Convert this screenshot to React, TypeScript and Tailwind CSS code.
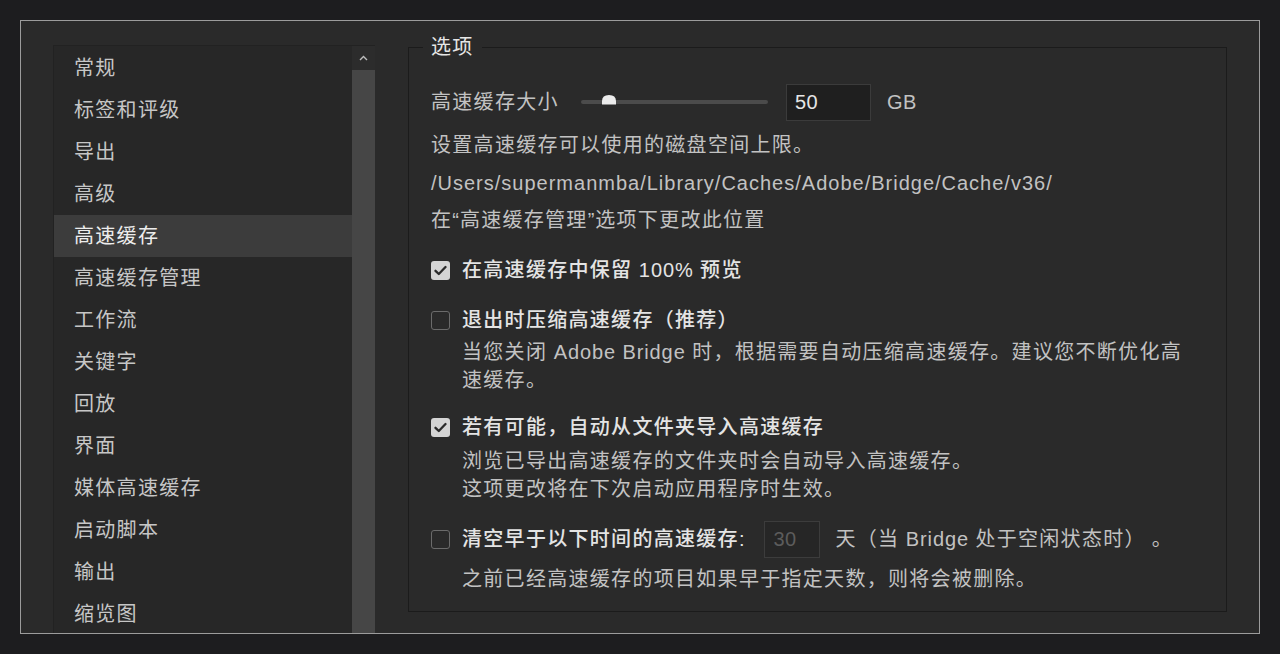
import React from "react";

const CJK = /([\u2E80-\u9FFF\u3000-\u303F\uFF00-\uFFEF]+)/;

function T({ s }: { s: string }) {
  const parts = s.split(CJK);
  return (
    <>
      {parts.map((p, i) =>
        i % 2 === 1 ? (
          <span key={i} className="tracking-[1.3px]">
            {p}
          </span>
        ) : (
          <span key={i} className="tracking-[0.9px]">
            {p}
          </span>
        )
      )}
    </>
  );
}

const items = [
  "常规",
  "标签和评级",
  "导出",
  "高级",
  "高速缓存",
  "高速缓存管理",
  "工作流",
  "关键字",
  "回放",
  "界面",
  "媒体高速缓存",
  "启动脚本",
  "输出",
  "缩览图",
];

function Check({ checked }: { checked: boolean }) {
  if (checked) {
    return (
      <div className="w-[19px] h-[19px] rounded-[3px] bg-[#d4d4d4] flex items-center justify-center shrink-0">
        <svg width="13" height="11" viewBox="0 0 13 11">
          <path d="M1.5 5.8 L4.8 9 L11.5 2" fill="none" stroke="#2a2a2a" strokeWidth="2.3" strokeLinecap="round" strokeLinejoin="round" />
        </svg>
      </div>
    );
  }
  return <div className="w-[19px] h-[19px] rounded-[3px] border border-[#6b6b6b] shrink-0" />;
}

export default function App() {
  return (
    <div
      className="w-[1280px] h-[654px] bg-[#1d1d1f] pt-[20px] pl-[20px] text-[20px]"
      style={{ fontFamily: '"Liberation Sans", "Noto Sans CJK SC", sans-serif' }}
    >
      <div className="w-[1240px] h-[614px] border border-[#9c9c9c] bg-[#2a2a2a] flex">
        {/* Left list */}
        <div className="ml-[32px] mt-[24px] w-[322px] flex bg-[#272727] border-l border-t border-[#222222]">
          <div className="w-[299px] pt-[1px]">
            {items.map((it, i) => (
              <div
                key={i}
                className={
                  i === 4
                    ? "h-[42px] flex items-center pl-[20px] bg-[#3c3c3c] text-[#ececec]"
                    : "h-[42px] flex items-center pl-[20px] text-[#c6c6c6]"
                }
              >
                <T s={it} />
              </div>
            ))}
          </div>
          <div className="w-[23px] flex flex-col">
            <div className="h-[24px] bg-[#2c2c2c] flex items-center justify-center">
              <svg width="9" height="6" viewBox="0 0 9 6">
                <path d="M1 5 L4.5 1.5 L8 5" fill="none" stroke="#bdbdbd" strokeWidth="1.4" />
              </svg>
            </div>
            <div className="flex-1 bg-[#464646]" />
          </div>
        </div>

        {/* Right group box */}
        <div className="ml-[33px] mt-[26px] w-[819px] h-[565px] border border-[#1b1b1b] relative">
          <div className="absolute left-[14px] -top-[15px] px-[8px] bg-[#2a2a2a] text-[#e6e6e6] leading-[28px]">
            <T s="选项" />
          </div>
          <div className="pl-[22px] pt-[36px] text-[#c2c2c2]">
            {/* slider row */}
            <div className="h-[36px] flex items-center">
              <span className="w-[128px]">
                <T s="高速缓存大小" />
              </span>
              <div className="ml-[22px] w-[187px] h-[4px] rounded-full bg-[#4b4b4b] relative">
                <svg className="absolute left-[20px] -top-[6px]" width="16" height="11" viewBox="0 0 16 11">
                  <path d="M1 10.5 L1 7 Q1 1 8 1 Q15 1 15 7 L15 10.5 Z" fill="#ececec" />
                </svg>
              </div>
              <div className="ml-[18px] w-[85px] h-[37px] bg-[#1f1f1f] border border-[#3b3b3b] flex items-center pl-[8px] text-[#e6e6e6] tracking-[0.5px]">
                50
              </div>
              <span className="ml-[16px] tracking-[0.5px]">GB</span>
            </div>

            <div className="mt-[6px] leading-[38px]">
              <div>
                <T s="设置高速缓存可以使用的磁盘空间上限。" />
              </div>
              <div className="tracking-[1px]">/Users/supermanmba/Library/Caches/Adobe/Bridge/Cache/v36/</div>
              <div className="leading-[37px]">
                <T s="在“高速缓存管理”选项下更改此位置" />
              </div>
            </div>

            {/* cb1 */}
            <div className="mt-[17px] h-[28px] flex items-center gap-[12px]">
              <Check checked={true} />
              <span className="text-[#e4e4e4] font-medium">
                <T s="在高速缓存中保留 100% 预览" />
              </span>
            </div>

            {/* cb2 */}
            <div className="mt-[22px] h-[28px] flex items-center gap-[12px]">
              <Check checked={false} />
              <span className="text-[#e4e4e4] font-medium">
                <T s="退出时压缩高速缓存（推荐）" />
              </span>
            </div>
            <div className="mt-[4px] pl-[31px] leading-[28px]">
              <div>
                <T s="当您关闭 Adobe Bridge 时，根据需要自动压缩高速缓存。建议您不断优化高" />
              </div>
              <div>
                <T s="速缓存。" />
              </div>
            </div>

            {/* cb3 */}
            <div className="mt-[19px] h-[28px] flex items-center gap-[12px]">
              <Check checked={true} />
              <span className="text-[#e4e4e4] font-medium">
                <T s="若有可能，自动从文件夹导入高速缓存" />
              </span>
            </div>
            <div className="mt-[6px] pl-[31px] leading-[28px]">
              <div>
                <T s="浏览已导出高速缓存的文件夹时会自动导入高速缓存。" />
              </div>
              <div>
                <T s="这项更改将在下次启动应用程序时生效。" />
              </div>
            </div>

            {/* cb4 */}
            <div className="mt-[18px] h-[36px] flex items-center">
              <Check checked={false} />
              <span className="ml-[12px] text-[#e4e4e4] font-medium">
                <T s="清空早于以下时间的高速缓存:" />
              </span>
              <div className="ml-[19px] w-[56px] h-[37px] bg-[#262626] border border-[#3c3c3c] flex items-center pl-[8px] text-[#5c5c5c] tracking-[0.5px]">
                30
              </div>
              <span className="ml-[15px]">
                <T s="天（当 Bridge 处于空闲状态时）" />
              </span>
              <span className="ml-[6px]">。</span>
            </div>
            <div className="mt-[8px] pl-[31px] leading-[28px]">
              <T s="之前已经高速缓存的项目如果早于指定天数，则将会被删除。" />
            </div>
          </div>
        </div>
      </div>
    </div>
  );
}
